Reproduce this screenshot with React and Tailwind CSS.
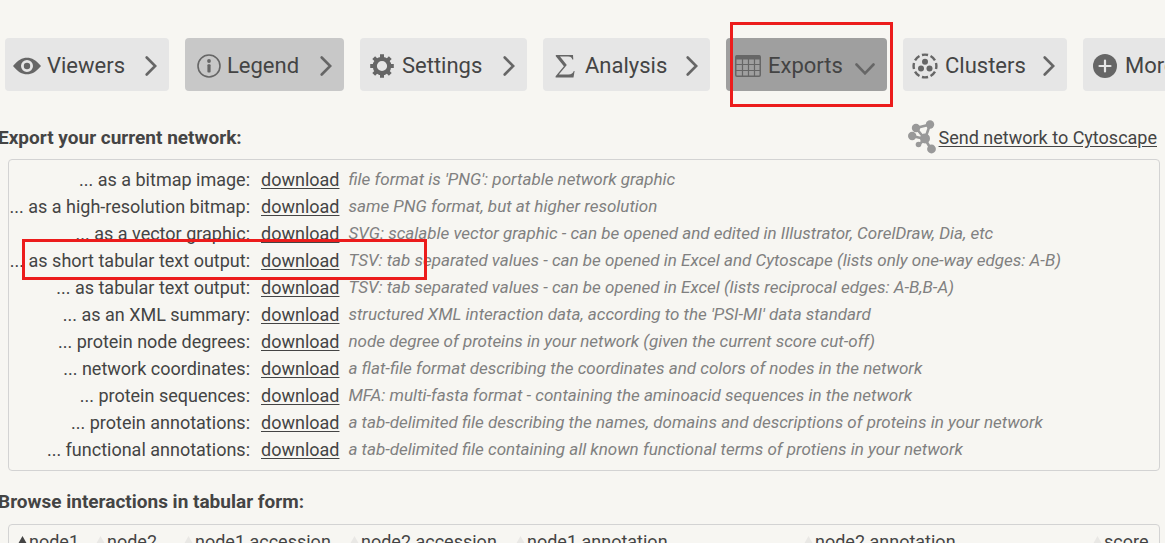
import React from 'react'

function EyeIcon() {
  return (
    <svg width="28" height="18" viewBox="0 0 28 18" fill="#666" aria-hidden="true">
      <path fillRule="evenodd" d="M0 9C5 3 9 .7 14 .7S23 3 28 9c-5 6-9 8.3-14 8.3S5 15 0 9Zm14-6a6 6 0 1 0 0 12 6 6 0 0 0 0-12Z" />
      <circle cx="14" cy="9" r="3.2" />
    </svg>
  )
}

function InfoIcon() {
  return (
    <svg width="28" height="24" viewBox="-4 0 28 24" fill="#666" aria-hidden="true">
      <circle cx="12" cy="12" r="11" fill="none" stroke="#666" strokeWidth="1.6" />
      <circle cx="12" cy="7" r="1.9" />
      <rect x="10.4" y="10.2" width="3.2" height="8.2" rx="1" />
    </svg>
  )
}

function GearIcon() {
  return (
    <svg width="24" height="24" viewBox="0 0 24 24" fill="none" stroke="#666" aria-hidden="true">
      <circle cx="12" cy="12" r="7.2" strokeWidth="4.2" />
      <g strokeWidth="4">
        <path d="M12 .2v4M12 19.800v4M.2 12h4M19.800 12h4M3.700 3.700l3 3M17.300 17.300l3 3M20.300 3.700l-3 3M6.700 17.300l-3 3" />
      </g>
    </svg>
  )
}

function SumIcon() {
  return (
    <svg width="20" height="24" viewBox="0 0 20 24" fill="#666" aria-hidden="true">
      <path d="M.8 1H18l.3 4.600h-1C16.800 3.300 15.800 2.500 13.200 2.500H5l6.800 8.500L3.800 20.400h9.700c3.100 0 4.400-.8 5.300-3.300h.8L18.500 23.500H.6v-1.200l8.300-10L.8 2.200Z" />
    </svg>
  )
}

function GridIcon() {
  return (
    <svg width="26" height="22" viewBox="0 0 26 22" fill="none" stroke="#666" aria-hidden="true">
      <rect x=".75" y=".75" width="24.500" height="20.500" rx="1.200" strokeWidth="1.500" />
      <path d="M1 2.500h24" strokeWidth="4" />
      <path d="M1 9.500h24M1 15.500h24M7.500 3v18M13.500 3v18M19.500 3v18" strokeWidth="1.200" />
    </svg>
  )
}

function ClusterIcon() {
  return (
    <svg width="26" height="26" viewBox="0 0 26 26" fill="#666" aria-hidden="true">
      <circle cx="13" cy="13" r="11.400" fill="none" stroke="#666" strokeWidth="2.400" pathLength="80" strokeDasharray="7 3" strokeDashoffset="3.500" transform="rotate(-90 13 13)" />
      <circle cx="13" cy="8.800" r="3" />
      <circle cx="9" cy="15.500" r="3" />
      <circle cx="17.500" cy="15.500" r="3" />
    </svg>
  )
}

function PlusIcon() {
  return (
    <svg width="24" height="24" viewBox="0 0 24 24" aria-hidden="true">
      <circle cx="12" cy="12" r="12" fill="#666" />
      <path d="M12 6.500v11M6.500 12h11" stroke="#e6e6e6" strokeWidth="2.200" strokeLinecap="round" />
    </svg>
  )
}

function Chevron({ open }) {
  if (open) {
    return (
      <svg className="mt-1.5" width="20" height="12" viewBox="0 0 20 12" fill="none" stroke="#666" strokeWidth="2.600" strokeLinecap="round" aria-hidden="true">
        <path d="M1.500 1.500 10 10.300 18.500 1.500" />
      </svg>
    )
  }
  return (
    <svg width="12" height="20" viewBox="0 0 12 20" fill="none" stroke="#666" strokeWidth="2.600" strokeLinecap="round" aria-hidden="true">
      <path d="M1.700 1.500 10.200 10 1.700 18.500" />
    </svg>
  )
}

function CytoscapeIcon() {
  return (
    <svg width="28" height="34" viewBox="0 0 28 34" fill="#999" aria-hidden="true">
      <path d="M8 8 22 4.500M8 8l9 11M22 4.500 17 19M4 16l13 3M17 19l6.500 11M17 19l-7 6.500" stroke="#999" strokeWidth="2.600" />
      <circle cx="8" cy="8" r="4.200" />
      <circle cx="22" cy="4.500" r="4.200" />
      <circle cx="4.200" cy="16" r="4.200" />
      <circle cx="17" cy="18.500" r="5" />
      <circle cx="10.500" cy="24.500" r="2.800" />
      <circle cx="23.500" cy="29" r="4.400" />
    </svg>
  )
}

const tabs = [
  { label: 'Viewers', Icon: EyeIcon, look: 'w-[164px] bg-[#e6e6e6]' },
  { label: 'Legend', Icon: InfoIcon, look: 'w-[159px] bg-[#c8c8c8]' },
  { label: 'Settings', Icon: GearIcon, look: 'w-[167px] bg-[#e6e6e6]' },
  { label: 'Analysis', Icon: SumIcon, look: 'w-[167px] bg-[#e6e6e6]' },
  { label: 'Exports', Icon: GridIcon, look: 'w-[161px] bg-[#9f9f9f]', open: true },
  { label: 'Clusters', Icon: ClusterIcon, look: 'w-[164px] bg-[#e6e6e6]' },
  { label: 'More', Icon: PlusIcon, look: 'w-[145px] bg-[#e6e6e6]' },
]

const exportRows = [
  ['... as a bitmap image:', "file format is 'PNG': portable network graphic"],
  ['... as a high-resolution bitmap:', 'same PNG format, but at higher resolution'],
  ['... as a vector graphic:', 'SVG: scalable vector graphic - can be opened and edited in Illustrator, CorelDraw, Dia, etc'],
  ['... as short tabular text output:', 'TSV: tab separated values - can be opened in Excel and Cytoscape (lists only one-way edges: A-B)', true],
  ['... as tabular text output:', 'TSV: tab separated values - can be opened in Excel (lists reciprocal edges: A-B,B-A)'],
  ['... as an XML summary:', "structured XML interaction data, according to the 'PSI-MI' data standard"],
  ['... protein node degrees:', 'node degree of proteins in your network (given the current score cut-off)'],
  ['... network coordinates:', 'a flat-file format describing the coordinates and colors of nodes in the network'],
  ['... protein sequences:', 'MFA: multi-fasta format - containing the aminoacid sequences in the network'],
  ['... protein annotations:', 'a tab-delimited file describing the names, domains and descriptions of proteins in your network'],
  ['... functional annotations:', 'a tab-delimited file containing all known functional terms of protiens in your network'],
]

const columns = [
  { label: 'node1', width: 'w-[78px]', sorted: true },
  { label: 'node2', width: 'w-[88px]' },
  { label: 'node1 accession', width: 'w-[166px]' },
  { label: 'node2 accession', width: 'w-[166px]' },
  { label: 'node1 annotation', width: 'w-[288px]' },
  { label: 'node2 annotation', width: 'w-[289px]' },
  { label: 'score', width: 'w-auto' },
]

export default function App() {
  return (
    <main className="flex h-screen flex-col overflow-hidden bg-[#f7f6f2] font-['Roboto',sans-serif] text-[18px] leading-[27px] text-[#444]">
      <nav className="flex shrink-0 gap-4 pt-[38px] pl-[5px]">
        {tabs.map(({ label, Icon, look, open }) => (
          <div key={label} className="relative shrink-0">
            <button type="button" aria-expanded={!!open} className={'flex h-[53px] items-center rounded-[4px] pt-0.5 pr-3 pl-2 text-[22px] ' + look}>
              <span className="flex w-[34px] items-center justify-center pr-1.5">
                <Icon />
              </span>
              <span>{label}</span>
              <span className="ml-auto">
                <Chevron open={open} />
              </span>
            </button>
            {open && <div className="pointer-events-none absolute -top-4 -right-1.5 -bottom-4 left-1 border-3 border-[#ec1c1c]" />}
          </div>
        ))}
      </nav>

      <section className="shrink-0 pt-[26px]">
        <div className="mb-0.5 flex h-10 items-center justify-between pr-2">
          <h2 className="-ml-0.5 text-[19px] font-bold">Export your current network:</h2>
          <a href="#cytoscape" className="flex items-center gap-[3px] underline underline-offset-2">
            <CytoscapeIcon />
            <span>Send network to Cytoscape</span>
          </a>
        </div>
        <div className="mr-[5px] ml-2 rounded-[4px] border border-[#d3d3d3] pt-1.5 pb-[7px]">
          <table className="border-collapse">
            <tbody>
              {exportRows.map(([label, text, marked]) => (
                <tr key={label} className="whitespace-nowrap">
                  <th scope="row" className="relative w-[241px] p-0 text-right font-normal">
                    {label}
                    {marked && <div className="pointer-events-none absolute -top-2 -right-[177px] -bottom-1.5 left-[13px] border-3 border-[#ec1c1c]" />}
                  </th>
                  <td className="py-0 pr-[9px] pl-[11px]">
                    <a href="#download" className="underline underline-offset-2">download</a>
                  </td>
                  <td className="p-0 text-[17px] leading-[27px] text-[#808080] italic">{text}</td>
                </tr>
              ))}
            </tbody>
          </table>
        </div>
      </section>

      <section className="shrink-0 pt-[17px]">
        <h2 className="-ml-0.5 text-[19px] font-bold">Browse interactions in tabular form:</h2>
        <div className="mt-[9px] mr-[5px] ml-2 rounded-[4px] border border-[#d3d3d3] py-[3px] pl-[9px]">
          <table className="w-full table-fixed border-collapse">
            <thead>
              <tr>
                {columns.map(({ label, width, sorted }) => (
                  <th key={label} scope="col" className={'p-0 text-left font-normal whitespace-nowrap ' + width}>
                    <span className="flex items-center gap-0.5">
                      <svg className="-mt-1" width="9" height="8" viewBox="0 0 9 8" fill={sorted ? '#444' : '#e9e8e5'} aria-hidden="true">
                        <path d="M4.500 0 9 8H0Z" />
                      </svg>
                      {label}
                    </span>
                  </th>
                ))}
              </tr>
            </thead>
          </table>
        </div>
      </section>
    </main>
  )
}
